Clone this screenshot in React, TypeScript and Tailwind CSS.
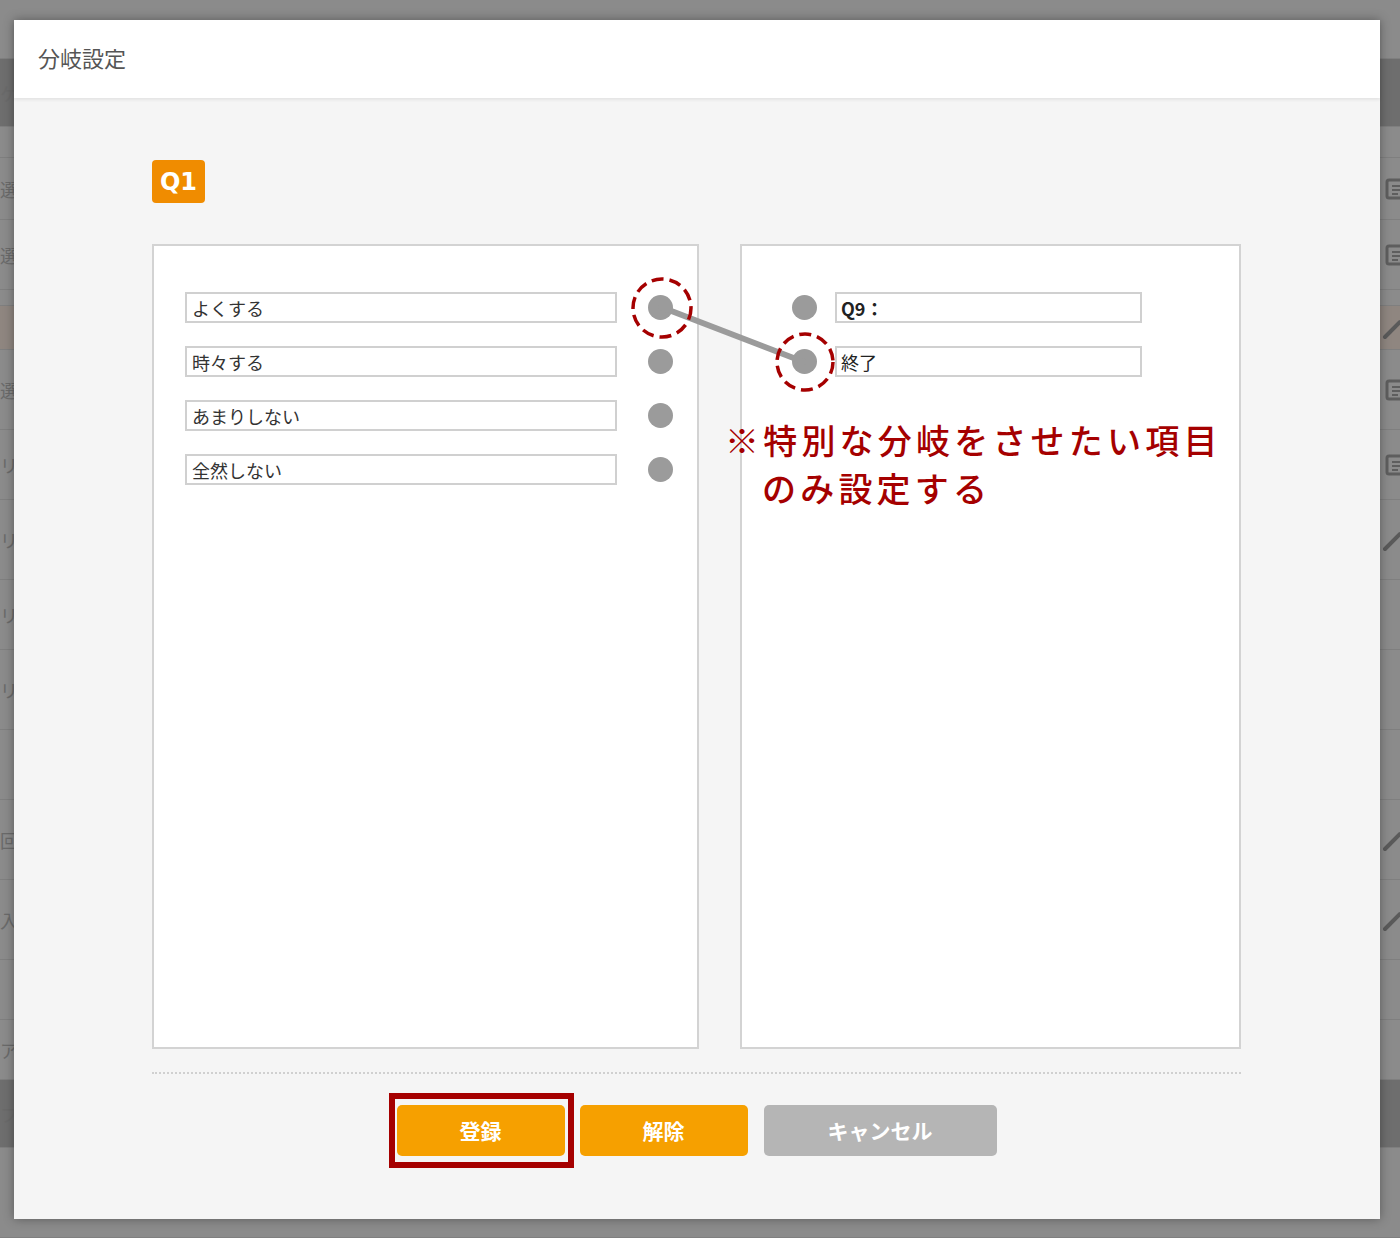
import React from "react";

type BgRow = { h: number; label?: string; icon?: "box" | "pen"; tone?: "dark" | "brown" };

const rows: BgRow[] = [
  { h: 59 },
  { h: 68, label: "ケ", tone: "dark" },
  { h: 31 },
  { h: 62, label: "選", icon: "box" },
  { h: 70, label: "選", icon: "box" },
  { h: 16 },
  { h: 44, icon: "pen", tone: "brown" },
  { h: 80, label: "選", icon: "box" },
  { h: 70, label: "リ", icon: "box" },
  { h: 80, label: "リ", icon: "pen" },
  { h: 70, label: "リ" },
  { h: 80, label: "リ" },
  { h: 70 },
  { h: 80, label: "回", icon: "pen" },
  { h: 80, label: "入", icon: "pen" },
  { h: 60 },
  { h: 60, label: "ア" },
  { h: 68, label: "フ", tone: "dark" },
  { h: 90 },
];

function BgIcon({ kind }: { kind: "box" | "pen" }) {
  if (kind === "box") {
    return (
      <svg width="22" height="24" viewBox="0 0 22 24" className="mr-[-6px]">
        <rect x="3" y="3" width="16" height="18" rx="2" fill="none" stroke="#5e5e5e" strokeWidth="3" />
        <path d="M8 9h8M8 13h8M8 17h6" stroke="#5e5e5e" strokeWidth="2" />
      </svg>
    );
  }
  return (
    <svg width="22" height="24" viewBox="0 0 22 24" className="mr-[-4px]">
      <path d="M3 21 L18 6" stroke="#5a5a5a" strokeWidth="4" strokeLinecap="round" />
    </svg>
  );
}

function Background() {
  return (
    <div className="flex flex-col w-full h-full">
      {rows.map((r, i) => (
        <div
          key={i}
          style={{ height: r.h }}
          className={
            "flex items-center justify-between border-b border-[#7f7f7f] " +
            (r.tone === "dark" ? "bg-[#6e6e6e]" : r.tone === "brown" ? "bg-[#8f8680]" : "bg-[#8b8b8b]")
          }
        >
          <span className="text-[18px] text-[#6a6a6a] leading-none font-['Noto_Sans_CJK_JP',sans-serif]">
            {r.label ?? ""}
          </span>
          <span>{r.icon ? <BgIcon kind={r.icon} /> : null}</span>
        </div>
      ))}
    </div>
  );
}

function LeftRow({ text }: { text: string }) {
  return (
    <div className="flex items-center">
      <div className="w-[432px] h-[31px] border-2 border-[#d0d0d0] bg-white pl-[5px] flex items-center text-[18px] text-[#333] leading-none">
        {text}
      </div>
      <div className="ml-[31px] w-[25px] h-[25px] rounded-full bg-[#9b9b9b]" />
    </div>
  );
}

function RightRow({ text, bold }: { text: string; bold?: boolean }) {
  return (
    <div className="flex items-center">
      <div className="w-[25px] h-[25px] rounded-full bg-[#9b9b9b]" />
      <div
        className={
          "ml-[18px] w-[307px] h-[31px] border-2 border-[#d0d0d0] bg-white pl-[4px] flex items-center text-[18px] text-[#222] leading-none " +
          (bold ? "font-semibold" : "")
        }
      >
        {text}
      </div>
    </div>
  );
}

export default function App() {
  return (
    <div className="relative w-[1400px] h-[1238px] overflow-hidden bg-[#8b8b8b] font-['Noto_Sans_CJK_JP','Noto_Sans',sans-serif]">
      <Background />

      <div className="absolute left-[14px] top-[20px] w-[1366px] h-[1199px] bg-[#f5f5f5] shadow-[0_0_10px_rgba(0,0,0,0.35)] flex flex-col">
        <div className="h-[78px] bg-white flex items-center pl-[24px] pb-[4px] shadow-[0_2px_3px_rgba(0,0,0,0.07)] relative z-10">
          <span className="text-[22px] text-[#555] leading-none">分岐設定</span>
        </div>

        <div className="flex-1 pl-[138px] pt-[62px]">
          <div className="w-[53px] h-[43px] bg-[#f08c00] rounded-[4px] flex items-center justify-center text-white font-bold text-[24px] leading-none font-['DejaVu_Sans',sans-serif]">
            Q1
          </div>

          <div className="relative mt-[41px] flex gap-[41px] w-[1089px]">
            <div className="w-[547px] h-[805px] border-2 border-[#d3d3d3] bg-white pt-[46px] pl-[31px] flex flex-col gap-[23px]">
              <LeftRow text="よくする" />
              <LeftRow text="時々する" />
              <LeftRow text="あまりしない" />
              <LeftRow text="全然しない" />
            </div>
            <div className="w-[501px] h-[805px] border-2 border-[#d3d3d3] bg-white pt-[46px] pl-[50px] flex flex-col gap-[23px]">
              <RightRow text="Q9：" bold />
              <RightRow text="終了" />
            </div>

            <svg className="absolute left-0 top-0 pointer-events-none" width="1089" height="805" viewBox="0 0 1089 805">
              <line x1="509" y1="63" x2="652" y2="118" stroke="#9b9b9b" strokeWidth="6" strokeLinecap="round" />
              <circle cx="510" cy="64" r="29" fill="none" stroke="#a50000" strokeWidth="3.5" strokeDasharray="12 6" />
              <circle cx="653" cy="118" r="28" fill="none" stroke="#a50000" strokeWidth="3.5" strokeDasharray="12 6" />
            </svg>

            <div className="absolute left-[573px] top-[172px] text-[#a50000] text-[34px] leading-[48px] tracking-[4.2px] font-medium whitespace-nowrap">
              <div>※特別な分岐をさせたい項目</div>
              <div className="pl-[37px]">のみ設定する</div>
            </div>
          </div>

          <div className="mt-[23px] w-[1089px] border-t-2 border-dotted border-[#d0d0d0]" />

          <div className="mt-[31px] w-[1089px] flex justify-center">
            <div className="relative">
              <span className="absolute -left-[8px] -right-[9px] -top-[12px] -bottom-[12px] border-[6px] border-[#a50000]" />
              <button className="relative w-[168px] h-[51px] rounded-[5px] bg-[#f6a000] text-white font-bold text-[21px] leading-none">
                登録
              </button>
            </div>
            <button className="ml-[15px] w-[168px] h-[51px] rounded-[5px] bg-[#f6a000] text-white font-bold text-[21px] leading-none">
              解除
            </button>
            <button className="ml-[16px] w-[233px] h-[51px] rounded-[5px] bg-[#b5b5b5] text-white font-bold text-[21px] leading-none">
              キャンセル
            </button>
          </div>
        </div>
      </div>
    </div>
  );
}
